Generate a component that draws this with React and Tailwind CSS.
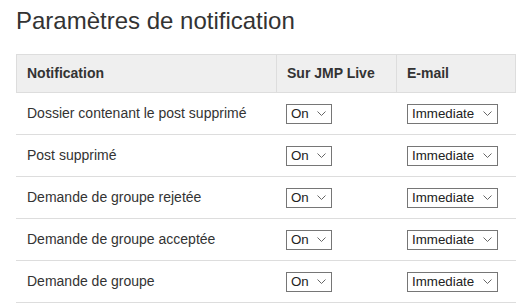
import React from "react";

const rows = [
  "Dossier contenant le post supprimé",
  "Post supprimé",
  "Demande de groupe rejetée",
  "Demande de groupe acceptée",
  "Demande de groupe",
];

function Chevron() {
  return (
    <svg width="9" height="5" viewBox="0 0 9 5" className="shrink-0">
      <polyline points="0.5,0.5 4.5,4.5 8.5,0.5" fill="none" stroke="#666" strokeWidth="1" />
    </svg>
  );
}

function Select({ label, width }) {
  return (
    <div
      className={`flex h-[20px] items-center justify-between border border-[#767676] bg-white pl-[4px] pr-[5px] text-[13.33px] leading-none text-[#222] ${width}`}
    >
      <span>{label}</span>
      <Chevron />
    </div>
  );
}

export default function App() {
  return (
    <div className="h-[307px] w-[521px] bg-white px-[16px] text-[#333]" style={{ fontFamily: '"Liberation Sans", Arial, sans-serif' }}>
      <h1 className="pt-[7px] text-[24px] font-normal leading-[28px] text-[#333]">Paramètres de notification</h1>
      <div className="mt-[19px] w-[500px]">
        <div className="grid h-[39px] grid-cols-[259px_120px_121px] border border-[#dddddd] bg-[#efefef] text-[14px] font-bold">
          <div className="flex items-center pl-[10px]">Notification</div>
          <div className="flex items-center border-l border-[#dddddd] pl-[10px]">Sur JMP Live</div>
          <div className="flex items-center border-l border-[#dddddd] pl-[10px]">E-mail</div>
        </div>
        {rows.map((r) => (
          <div key={r} className="grid h-[42px] grid-cols-[259px_120px_121px] border-b border-[#dddddd] text-[14px]">
            <div className="flex items-center pl-[11px]">{r}</div>
            <div className="flex items-center pl-[11px]">
              <Select label="On" width="w-[46px]" />
            </div>
            <div className="flex items-center pl-[12px]">
              <Select label="Immediate" width="w-[91px]" />
            </div>
          </div>
        ))}
      </div>
    </div>
  );
}
